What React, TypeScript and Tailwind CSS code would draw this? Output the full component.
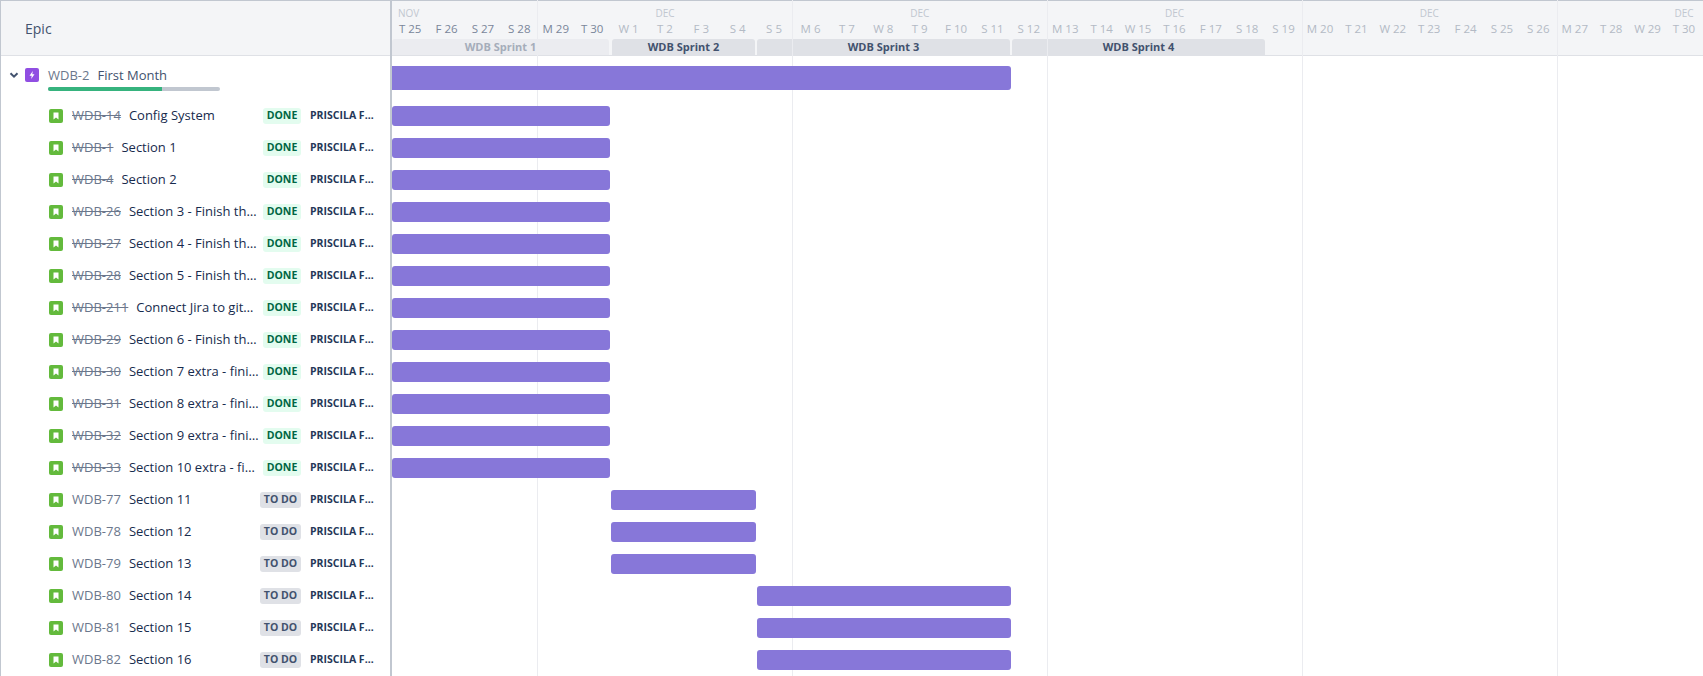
const font = "font-['Open_Sans','Noto_Sans',sans-serif]";

type Row = { k: string; s: string; done: boolean; bar: 1 | 2 | 3 };
const rows: Row[] = [
  { k: "WDB-14", s: "Config System", done: true, bar: 1 },
  { k: "WDB-1", s: "Section 1", done: true, bar: 1 },
  { k: "WDB-4", s: "Section 2", done: true, bar: 1 },
  { k: "WDB-26", s: "Section 3 - Finish the tasks", done: true, bar: 1 },
  { k: "WDB-27", s: "Section 4 - Finish the tasks", done: true, bar: 1 },
  { k: "WDB-28", s: "Section 5 - Finish the tasks", done: true, bar: 1 },
  { k: "WDB-211", s: "Connect Jira to github", done: true, bar: 1 },
  { k: "WDB-29", s: "Section 6 - Finish the tasks", done: true, bar: 1 },
  { k: "WDB-30", s: "Section 7 extra - finish", done: true, bar: 1 },
  { k: "WDB-31", s: "Section 8 extra - finish", done: true, bar: 1 },
  { k: "WDB-32", s: "Section 9 extra - finish", done: true, bar: 1 },
  { k: "WDB-33", s: "Section 10 extra - finish", done: true, bar: 1 },
  { k: "WDB-77", s: "Section 11", done: false, bar: 2 },
  { k: "WDB-78", s: "Section 12", done: false, bar: 2 },
  { k: "WDB-79", s: "Section 13", done: false, bar: 2 },
  { k: "WDB-80", s: "Section 14", done: false, bar: 3 },
  { k: "WDB-81", s: "Section 15", done: false, bar: 3 },
  { k: "WDB-82", s: "Section 16", done: false, bar: 3 },
];

const weeks = [
  { w: "w-[145.6px]", m: "NOV", left: true, days: [["T 25", 1], ["F 26", 1], ["S 27", 1], ["S 28", 1]] },
  { w: "w-[254.75px]", m: "DEC", days: [["M 29", 1], ["T 30", 1], ["W 1", 0], ["T 2", 0], ["F 3", 0], ["S 4", 0], ["S 5", 0]] },
  { w: "w-[254.75px]", m: "DEC", days: [["M 6", 0], ["T 7", 0], ["W 8", 0], ["T 9", 0], ["F 10", 0], ["S 11", 0], ["S 12", 0]] },
  { w: "w-[254.75px]", m: "DEC", days: [["M 13", 0], ["T 14", 0], ["W 15", 0], ["T 16", 0], ["F 17", 0], ["S 18", 0], ["S 19", 0]] },
  { w: "w-[254.75px]", m: "DEC", days: [["M 20", 0], ["T 21", 0], ["W 22", 0], ["T 23", 0], ["F 24", 0], ["S 25", 0], ["S 26", 0]] },
  { w: "w-[254.75px]", m: "DEC", days: [["M 27", 0], ["T 28", 0], ["W 29", 0], ["T 30", 0]] },
] as { w: string; m: string; left?: boolean; days: [string, number][] }[];

const sprints = [
  { n: "WDB Sprint 1", c: "ml-0 w-[217px] text-[#a5adba] bg-[#ebecf0]" },
  { n: "WDB Sprint 2", c: "ml-[3px] w-[143px] text-[#42526e] bg-[#dfe1e6]" },
  { n: "WDB Sprint 3", c: "ml-[2px] w-[253px] text-[#42526e] bg-[#dfe1e6]" },
  { n: "WDB Sprint 4", c: "ml-[2px] w-[253px] text-[#42526e] bg-[#dfe1e6]" },
];

const gridLines = ["ml-[145px]", "ml-[254px]", "ml-[254px]", "ml-[254px]", "ml-[254px]"];

function Story() {
  return (
    <svg width="14" height="14" viewBox="0 0 14 14" className="shrink-0">
      <rect width="14" height="14" rx="2" fill="#63ba3c" />
      <path d="M4.5 3.5h5v7L7 8.6 4.5 10.500z" fill="#fff" />
    </svg>
  );
}

function Bar({ n }: { n: 1 | 2 | 3 }) {
  const c = n === 1 ? "ml-0 w-[218px]" : n === 2 ? "ml-[219px] w-[145px]" : "ml-[365px] w-[254px]";
  return <div className={`h-5 rounded-[3px] bg-[#8777d9] ${c}`} />;
}

export default function App() {
  return (
    <div className={`flex h-[676px] w-[1703px] overflow-hidden bg-white ${font}`}>
      {/* left panel */}
      <div className="flex h-full w-[392px] shrink-0 flex-col border-y-0 border-r-2 border-l border-[#c1c7d0]">
        <div className="flex h-[56px] shrink-0 items-center border-t border-b border-t-[#c1c7d0] border-b-[#dfe1e6] bg-[#f4f5f7] pl-[24px] text-[14px] text-[#42526e]">
          Epic
        </div>
        <div className="relative flex h-[44px] shrink-0 pt-[9px] pl-[7px]">
          <svg width="12" height="12" viewBox="0 0 12 12" className="mt-[4px] shrink-0">
            <path d="M2.500 4.200 6 7.700l3.500-3.500" fill="none" stroke="#42526e" strokeWidth="2" />
          </svg>
          <svg width="14" height="14" viewBox="0 0 14 14" className="mt-[3px] ml-[5px] shrink-0">
            <rect width="14" height="14" rx="2" fill="#904ee2" />
            <path d="M7.800 3 4.500 7.800h2.200L6.200 11l3.300-4.800H7.300z" fill="#fff" />
          </svg>
          <div className="ml-[9px] flex flex-col">
            <div className="flex h-[20px] items-center text-[13px] leading-5 whitespace-nowrap">
              <span className="text-[#6b778c]">WDB-2</span>
              <span className="ml-[8px] text-[#42526e]">First Month</span>
            </div>
            <div className="mt-[2px] flex h-[4px] w-[172px] overflow-hidden rounded-full bg-[#c1c7d0]">
              <div className="h-full w-[114px] bg-[#36b37e]" />
            </div>
          </div>
        </div>
        {rows.map((r) => (
          <div key={r.k} className="flex h-8 shrink-0 items-center pl-[48px]">
            <Story />
            <span className={`ml-[9px] shrink-0 text-[13px] text-[#6b778c] ${r.done ? "line-through" : ""}`}>{r.k}</span>
            <span className="ml-[8px] min-w-0 flex-1 truncate text-[13px] text-[#172b4d]">{r.s}</span>
            <span
              className={`ml-[4px] flex h-4 shrink-0 items-center justify-center rounded-[3px] text-[10.500px] font-bold ${
                r.done ? "w-[38px] bg-[#e3fcef] text-[#006644]" : "w-[41px] bg-[#dfe1e6] text-[#42526e]"
              }`}
            >
              {r.done ? "DONE" : "TO DO"}
            </span>
            <span className="mr-[16px] ml-[9px] w-[64px] shrink-0 truncate text-[10.500px] font-bold text-[#253858]">
              PRISCILA FERREIRA
            </span>
          </div>
        ))}
      </div>

      {/* timeline */}
      <div className="relative min-w-0 flex-1">
        <div className="h-[56px] border-t border-b border-t-[#c1c7d0] border-b-[#dfe1e6] bg-[#f4f5f7]">
          <div className="flex h-[38px]">
            {weeks.map((w, i) => (
              <div key={i} className={`flex shrink-0 flex-col ${w.w}`}>
                <div className={`h-[18px] pt-[6px] text-[10px] leading-3 text-[#c1c7d0] ${w.left ? "pl-[6px]" : "text-center"}`}>{w.m}</div>
                <div className="flex h-[20px] items-center">
                  {w.days.map(([d, dark]) => (
                    <span key={d} className={`w-[36.390px] text-center text-[11.500px] whitespace-nowrap ${dark ? "text-[#7a869a]" : "text-[#b3bac5]"}`}>
                      {d}
                    </span>
                  ))}
                </div>
              </div>
            ))}
          </div>
          <div className="flex h-[16px]">
            {sprints.map((s) => (
              <div key={s.n} className={`flex h-[16px] items-center justify-center rounded-t-[3px] text-[11px] font-bold ${s.c}`}>
                {s.n}
              </div>
            ))}
          </div>
        </div>

        <div className="pointer-events-none absolute inset-0 flex">
          {gridLines.map((g, i) => (
            <div key={i} className={`h-full w-[1px] shrink-0 bg-[#ebecf0] ${g}`} />
          ))}
        </div>

        <div className="relative">
          <div className="pt-[10px] pb-[10px]">
            <div className="h-6 w-[619px] rounded-r-[3px] bg-[#8777d9]" />
          </div>
          {rows.map((r) => (
            <div key={r.k} className="flex h-8 items-center">
              <div className="w-full"><Bar n={r.bar} /></div>
            </div>
          ))}
        </div>
      </div>
    </div>
  );
}
